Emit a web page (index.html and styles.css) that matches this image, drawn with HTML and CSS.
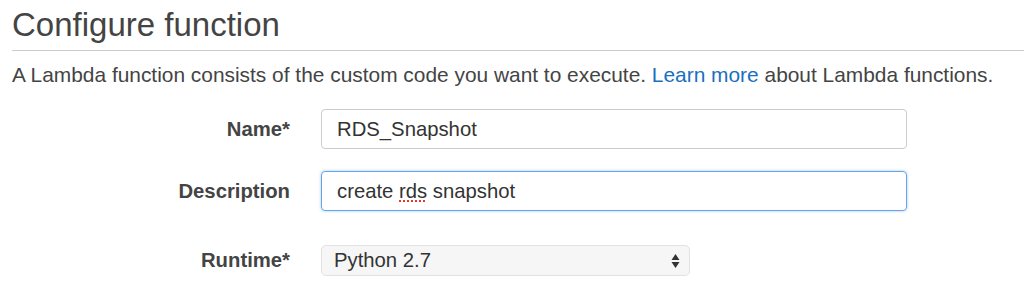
FILE: index.html
```html
<!DOCTYPE html>
<html>
<head>
<meta charset="utf-8">
<link rel="stylesheet" href="styles.css">
</head>
<body>
<div class="page">
  <h1 class="title">Configure function</h1>
  <p class="intro">A Lambda function consists of the custom code you want to execute. <a class="link" href="#">Learn more</a> about Lambda functions.</p>
  <div class="form">
    <div class="row row-name">
      <label class="label">Name*</label>
      <div class="field input"><span class="value">RDS_Snapshot</span></div>
    </div>
    <div class="row row-desc">
      <label class="label">Description</label>
      <div class="field input focused"><span class="value">create <span class="misspelled">rds</span> snapshot</span></div>
    </div>
    <div class="row row-runtime">
      <label class="label">Runtime*</label>
      <div class="field select">
        <span class="value">Python 2.7</span>
        <svg class="arrows" width="9" height="16" viewBox="0 0 9 16"><path d="M4.5 1 L8.5 7 H0.5 Z M4.5 15 L8.5 9 H0.5 Z" fill="#333"/></svg>
      </div>
    </div>
  </div>
</div>
</body>
</html>
```
FILE: styles.css
```css
html, body {
  margin: 0;
  padding: 0;
  background: #fff;
}
.page {
  padding: 0 0 0 12px;
  font-family: "Liberation Sans", Arial, sans-serif;
  color: #444;
}
.title {
  margin: 0;
  padding-top: 5px;
  font-size: 33px;
  font-weight: normal;
  line-height: 40px;
  color: #444;
  border-bottom: 1px solid #ccc;
  padding-bottom: 5px;
}
.intro {
  margin: 0;
  padding-top: 12px;
  font-size: 20.9px;
  line-height: 24px;
  color: #444;
}
.link {
  color: #1a6fbf;
  text-decoration: none;
}
.form {
  margin-top: 22px;
  display: flex;
  flex-direction: column;
}
.row {
  display: grid;
  grid-template-columns: 278px auto;
  column-gap: 31px;
  align-items: center;
}
.row-desc { margin-top: 22px; }
.row-runtime { margin-top: 34px; }
.label {
  text-align: right;
  font-weight: bold;
  font-size: 20.3px;
  color: #444;
}
.field {
  box-sizing: border-box;
  font-size: 20.3px;
  color: #333;
}
.input {
  width: 586px;
  height: 40px;
  border: 1px solid #ccc;
  border-radius: 4px;
  padding: 0 15px;
  display: flex;
  align-items: center;
}
.focused {
  border-color: #66a3e8;
  box-shadow: 0 0 3px rgba(102, 163, 232, 0.6);
}
.misspelled {
  text-decoration: underline dotted #e33;
  text-decoration-thickness: 2px;
  text-underline-offset: 3px;
}
.select {
  width: 369px;
  height: 31px;
  border: 1px solid #e2e2e2;
  border-radius: 5px;
  background: #f6f6f6;
  padding: 0 9px 0 12px;
  display: flex;
  align-items: center;
  justify-content: space-between;
}
.arrows { display: block; }
```
